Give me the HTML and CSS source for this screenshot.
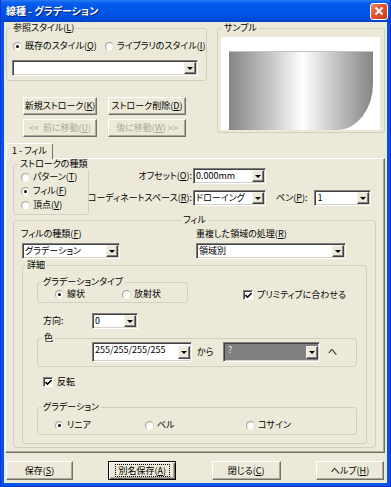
FILE: index.html
```html
<!DOCTYPE html>
<html lang="ja">
  <head>
    <meta charset="UTF-8" />
    <title>線種 - グラデーション</title>
    <link rel="stylesheet" href="styles.css">
  </head>
  <body>
    <div class="window">
      <div class="titlebar">
        <span class="title">線種 - グラデーション</span>
        <span class="close">
          <svg width="10" height="10" viewBox="0 0 10 10"><path d="M1.5 1.5 L8.5 8.5 M8.5 1.5 L1.5 8.5" stroke="#fff" stroke-width="2" fill="none"/></svg>
        </span>
      </div>

      <div class="client">
        <div class="top">
          <div class="top-left">
            <fieldset class="grp ref">
              <legend>参照スタイル(<u>L</u>)</legend>
              <div class="ref-radios">
                <label class="radio on w92"><i></i>既存のスタイル(<u>Q</u>)</label>
                <label class="radio"><i></i>ライブラリのスタイル(<u>I</u>)</label>
              </div>
              <div class="combo ref-combo"><span class="val"></span><span class="drop"></span></div>
            </fieldset>
            <div class="btnrow first">
              <span class="btn w74">新規ストローク(<u>K</u>)</span>
              <span class="btn w78">ストローク削除(<u>D</u>)</span>
            </div>
            <div class="btnrow second">
              <span class="btn w74 off">&lt;&lt;&nbsp; 前に移動(<u>U</u>)</span>
              <span class="btn w78 off">後に移動(<u>W</u>) &gt;&gt;</span>
            </div>
          </div>
          <fieldset class="grp sample">
            <legend>サンプル</legend>
            <div class="canvas"><div class="shape"></div></div>
          </fieldset>
        </div>

        <div class="tabs"><span class="tab">1 - フィル</span></div>

        <div class="panel">
          <div class="row-a">
            <fieldset class="grp stroke">
              <legend>ストロークの種類</legend>
              <label class="radio row"><i></i>パターン(<u>T</u>)</label>
              <label class="radio row on"><i></i>フィル(<u>F</u>)</label>
              <label class="radio row"><i></i>頂点(<u>V</u>)</label>
            </fieldset>
            <div class="props">
              <span class="plabel">オフセット(<u>O</u>):</span>
              <div class="combo"><span class="val">0.000mm</span><span class="drop"></span></div>
              <span></span>
              <span class="plabel">コーディネートスペース(<u>R</u>):</span>
              <div class="combo"><span class="val">ドローイング</span><span class="drop"></span></div>
              <div class="pen">
                <span>ペン(<u>P</u>):</span>
                <div class="combo w57"><span class="val">1</span><span class="drop"></span></div>
              </div>
            </div>
          </div>

          <fieldset class="grp fill">
            <legend>フィル</legend>
            <div class="fill-head">
              <div class="col1">
                <span>フィルの種類(<u>F</u>)</span>
                <div class="combo w98"><span class="val">グラデーション</span><span class="drop"></span></div>
              </div>
              <div class="col2">
                <span>重複した領域の処理(<u>R</u>)</span>
                <div class="combo w150"><span class="val">領域別</span><span class="drop"></span></div>
              </div>
            </div>

            <fieldset class="grp detail">
              <legend>詳細</legend>
              <div class="grad-row">
                <fieldset class="grp gtype">
                  <legend>グラデーションタイプ</legend>
                  <div class="radios">
                    <label class="radio on w67"><i></i>線状</label>
                    <label class="radio"><i></i>放射状</label>
                  </div>
                </fieldset>
                <label class="check on prim"><i><svg width="7" height="7" viewBox="0 0 7 7"><path d="M0.5 3 L2.5 5.2 L6.5 1" stroke="#000" stroke-width="1.6" fill="none"/></svg></i>プリミティブに合わせる</label>
              </div>
              <div class="dir-row">
                <span class="dlabel">方向:</span>
                <div class="combo w46"><span class="val">0</span><span class="drop"></span></div>
              </div>
              <fieldset class="grp color">
                <legend>色</legend>
                <div class="color-row">
                  <div class="combo tall w100"><span class="val">255/255/255/255</span><span class="drop"></span></div>
                  <span class="kara">から</span>
                  <div class="combo tall gray w97"><span class="val">?</span><span class="drop"></span></div>
                  <span class="he">へ</span>
                </div>
              </fieldset>
              <label class="check on flip"><i><svg width="7" height="7" viewBox="0 0 7 7"><path d="M0.5 3 L2.5 5.2 L6.5 1" stroke="#000" stroke-width="1.6" fill="none"/></svg></i>反転</label>
              <fieldset class="grp gcurve">
                <legend>グラデーション</legend>
                <div class="radios">
                  <label class="radio on w90"><i></i>リニア</label>
                  <label class="radio w101"><i></i>ベル</label>
                  <label class="radio"><i></i>コサイン</label>
                </div>
              </fieldset>
            </fieldset>
          </fieldset>
        </div>

        <div class="footer">
          <span class="btn w67">保存(<u>S</u>)</span>
          <span class="btn w68 default"><span class="focus">別名保存(<u>A</u>)</span></span>
          <span class="btn w69">閉じる(<u>C</u>)</span>
          <span class="btn w68">ヘルプ(<u>H</u>)</span>
        </div>
      </div>
    </div>
  </body>
</html>
```

FILE: styles.css
```css
* {
  box-sizing: border-box;
}
body {
  margin: 0;
  font-family: "Noto Sans CJK JP", "Noto Sans", sans-serif;
  font-size: 9px;
  line-height: 12px;
  font-feature-settings: "palt";
  color: #000;
}
u {
  text-decoration: underline;
  text-underline-offset: 1px;
}

/* window frame */
.window {
  width: 391px;
  height: 487px;
  background: #0055e5;
  border: 1px solid #0831d9;
  border-top: none;
  padding: 0 3px 3px 3px;
}
.titlebar {
  height: 22px;
  margin: 0 -3px;
  display: flex;
  align-items: center;
  justify-content: space-between;
  padding: 0 2px 0 5px;
  background: linear-gradient(#2a7cf3 0%, #0a62f0 12%, #0057e8 30%, #0055e6 65%, #004bd8 88%, #0042c4 100%);
}
.title {
  color: #fff;
  font-weight: bold;
  font-size: 10px;
  text-shadow: 1px 1px #0a1e72;
}
.close {
  width: 18px;
  height: 17px;
  border: 1px solid #fff;
  border-radius: 3px;
  background: linear-gradient(135deg, #f08a66 0%, #e2552c 45%, #c83b16 100%);
  display: flex;
  align-items: center;
  justify-content: center;
}
.client {
  height: 461px;
  background: #ece9d8;
}

/* common controls */
.grp {
  margin: 0;
  padding: 0;
  min-width: 0;
  border: 1px solid #d0d0bf;
  border-radius: 3px;
}
legend {
  padding: 0 2px;
  margin-left: 4px;
  line-height: 12px;
  white-space: nowrap;
}
.radio,
.check {
  display: inline-flex;
  align-items: center;
  height: 12px;
  white-space: nowrap;
}
.radio i {
  width: 9px;
  height: 9px;
  margin-right: 3px;
  border-radius: 50%;
  background: radial-gradient(circle at 60% 60%, #fff 40%, #e6e4da 100%);
  border: 1px solid;
  border-color: #a8a69c #dcdad0 #f4f3ee #a8a69c;
  display: flex;
  align-items: center;
  justify-content: center;
}
.radio.on i::before {
  content: "";
  width: 3px;
  height: 3px;
  border-radius: 50%;
  background: #000;
}
.check i {
  width: 10px;
  height: 10px;
  margin-right: 4px;
  background: #fff;
  border: 1px solid;
  border-color: #808080 #fff #fff #808080;
  box-shadow: inset 1px 1px #404040;
  display: flex;
  align-items: center;
  justify-content: center;
  padding: 1px 0 0 1px;
}
.w46 { width: 46px; }
.w57 { width: 57px; }
.w67 { width: 67px; }
.w68 { width: 68px; }
.w69 { width: 69px; }
.w74 { width: 74px; }
.w78 { width: 78px; }
.w90 { width: 90px; }
.w92 { width: 92px; }
.w97 { width: 97px; }
.w98 { width: 98px; }
.w100 { width: 100px; }
.w101 { width: 101px; }
.w150 { width: 150px; }

.combo {
  display: flex;
  height: 16px;
  padding: 1px;
  background: #fff;
  border: 1px solid;
  border-color: #808080 #fff #fff #808080;
  box-shadow: inset 1px 1px #404040, inset -1px -1px #d4d0c8;
}
.combo .val {
  flex: 1;
  padding-left: 1px;
  line-height: 12px;
  white-space: nowrap;
  overflow: hidden;
}
.combo .drop {
  width: 12px;
  height: 12px;
  background: #ece9d8;
  border: 1px solid;
  border-color: #f4f3ee #404040 #404040 #f4f3ee;
  box-shadow: inset -1px -1px #808080;
  display: flex;
  align-items: center;
  justify-content: center;
}
.combo .drop::before {
  content: "";
  border-style: solid;
  border-width: 3px 3px 0;
  border-color: #000 transparent transparent;
}
.combo.tall {
  height: 20px;
}
.combo.tall .drop {
  align-self: flex-end;
  height: 13px;
  margin-bottom: 1px;
}
.combo.gray {
  background: #808080;
}
.combo.gray .val {
  color: #e8e8e8;
  padding-left: 3px;
}

.btn {
  display: flex;
  align-items: center;
  justify-content: center;
  height: 18px;
  background: #ece9d8;
  border: 1px solid;
  border-color: #fff #716f64 #716f64 #fff;
  box-shadow: inset -1px -1px #aca899;
  white-space: nowrap;
}
.btn.off {
  color: #aca899;
}
.btn.default {
  border-color: #000;
  box-shadow: inset 1px 1px #fff, inset -1px -1px #716f64, inset -2px -2px #aca899;
}
.btn .focus {
  outline: 1px dotted #000;
  outline-offset: 0;
  padding: 0 3px;
  line-height: 11px;
}

/* top area */
.top {
  display: flex;
  height: 115px;
  padding-left: 2px;
}
.top-left {
  width: 201px;
}
.ref {
  height: 59px;
}
.ref-radios {
  display: flex;
  margin-top: 6px;
  padding-left: 6px;
}
.ref-combo {
  width: 186px;
  margin: 8px 0 0 5px;
}
.btnrow {
  display: flex;
  gap: 11px;
  margin-left: 17px;
}
.btnrow.first {
  margin-top: 16px;
}
.btnrow.second {
  margin-top: 4px;
}
.sample {
  width: 168px;
  height: 111px;
  margin-left: 10px;
}
.canvas {
  width: 159px;
  height: 93px;
  margin: 3px 0 0 3px;
  padding: 14px 0 0 8px;
  background: #fff;
  overflow: hidden;
}
.shape {
  width: 144px;
  height: 79px;
  border-top: 1px solid #c4c4c4;
  background: linear-gradient(90deg, #858585 0%, #c8c8c8 30%, #fff 51%, #c8c8c8 72%, #858585 100%);
  border-bottom-right-radius: 36px 46px;
}

/* tab */
.tabs {
  display: flex;
  margin: 6px 0 0 2px;
  height: 15px;
}
.tab {
  position: relative;
  z-index: 1;
  width: 47px;
  height: 16px;
  padding: 1px 0 0 5px;
  background: #ece9d8;
  border: 1px solid;
  border-color: #fff #716f64 transparent #fff;
  border-radius: 2px 2px 0 0;
  border-bottom: none;
}
.panel {
  width: 380px;
  height: 295px;
  margin-left: 1px;
  border: 1px solid;
  border-color: #fff #716f64 #716f64 #fff;
  box-shadow: inset -1px -1px #aca899;
}

/* stroke type + properties */
.row-a {
  display: flex;
  height: 55px;
}
.stroke {
  flex: none;
  width: 76px;
  height: 57px;
  margin: -1px 0 0 7px;
}
.radio.row {
  display: flex;
  height: 14px;
  padding-left: 7px;
}
.props {
  display: grid;
  grid-template-columns: 100px 73px auto;
  row-gap: 6px;
  align-items: center;
  margin: 9px 0 0 4px;
  height: 38px;
}
.plabel {
  justify-self: end;
  padding-right: 1px;
  white-space: nowrap;
}
.pen {
  display: flex;
  align-items: center;
  gap: 7px;
  margin-left: 10px;
}

/* fill group */
.fill {
  width: 363px;
  height: 234px;
  margin-left: 7px;
}
.fill > legend {
  margin: 0 auto;
}
.fill-head {
  display: flex;
  margin-top: 2px;
}
.fill-head .col1 {
  width: 182px;
  padding-left: 7px;
}
.fill-head .combo {
  margin-top: 3px;
}
.fill-head .col1 .combo {
  margin-left: 1px;
}
.detail {
  width: 345px;
  height: 185px;
  margin-left: 8px;
}
.detail > legend {
  margin-left: 2px;
}
.grad-row {
  display: flex;
  margin-top: 5px;
}
.gtype {
  flex: none;
  width: 151px;
  height: 27px;
  margin-left: 14px;
}
.gtype legend,
.gcurve legend {
  margin-left: 3px;
}
.radios {
  display: flex;
  padding-left: 17px;
}
.prim {
  margin: 13px 0 0 55px;
}
.dir-row {
  display: flex;
  align-items: center;
  margin-top: 10px;
  padding-left: 20px;
}
.dlabel {
  width: 49px;
}
.color {
  width: 320px;
  height: 35px;
  margin: 3px 0 0 14px;
}
.color-row {
  display: flex;
  align-items: center;
  margin: -2px 0 0 54px;
}
.kara {
  width: 26px;
  margin-left: 5px;
}
.he {
  margin-left: 8px;
}
.flip {
  display: flex;
  margin: 9px 0 0 20px;
}
.gcurve {
  width: 320px;
  height: 34px;
  margin: 13px 0 0 14px;
}
.gcurve .radios {
  margin-top: 6px;
}

/* bottom buttons */
.footer {
  display: flex;
  justify-content: space-between;
  margin-top: 8px;
  padding: 0 3px 0 2px;
}
.footer .btn {
  height: 19px;
}
```
